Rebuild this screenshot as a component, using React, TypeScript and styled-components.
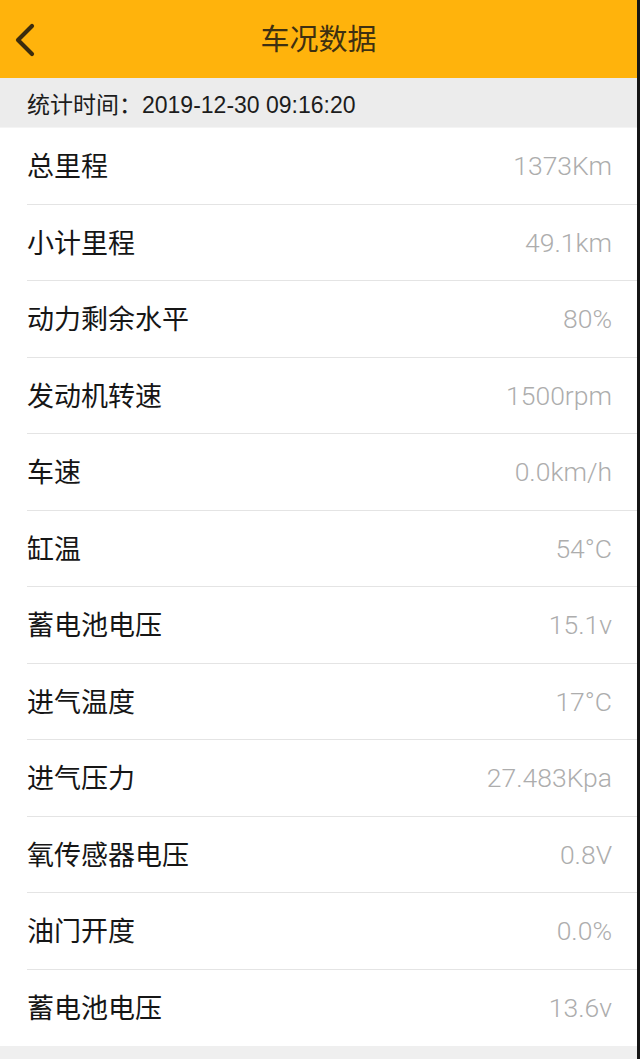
import React from "react";
import styled, { createGlobalStyle } from "styled-components";

const GlobalStyle = createGlobalStyle`
  html, body {
    margin: 0;
    padding: 0;
    background: #efefef;
  }
  body {
    font-family: "Liberation Sans", "Noto Sans CJK SC", sans-serif;
  }
`;

const ITEMS = [
  { label: "总里程", value: "1373Km" },
  { label: "小计里程", value: "49.1km" },
  { label: "动力剩余水平", value: "80%" },
  { label: "发动机转速", value: "1500rpm" },
  { label: "车速", value: "0.0km/h" },
  { label: "缸温", value: "54°C" },
  { label: "蓄电池电压", value: "15.1v" },
  { label: "进气温度", value: "17°C" },
  { label: "进气压力", value: "27.483Kpa" },
  { label: "氧传感器电压", value: "0.8V" },
  { label: "油门开度", value: "0.0%" },
  { label: "蓄电池电压", value: "13.6v" },
];

function App() {
  return (
    <Page>
      <GlobalStyle />
      <Header>
        <BackButton aria-label="返回">
          <svg width="24" height="36" viewBox="0 0 24 36">
            <path
              d="M20 4 L6 18 L20 32"
              fill="none"
              stroke="#3b2c0e"
              strokeWidth="4.2"
              strokeLinecap="round"
              strokeLinejoin="round"
            />
          </svg>
        </BackButton>
        <Title>车况数据</Title>
      </Header>
      <TimeBar>统计时间：2019-12-30 09:16:20</TimeBar>
      <List>
        {ITEMS.map((item, i) => (
          <Row key={i} last={i === ITEMS.length - 1}>
            <Label>{item.label}</Label>
            <Value>{item.value}</Value>
          </Row>
        ))}
      </List>
      <Footer />
    </Page>
  );
}

const Page = styled.div`
  width: 640px;
  min-height: 1059px;
  box-sizing: border-box;
  border-right: 3px solid #151515;
  display: flex;
  flex-direction: column;
  background: #efefef;
`;

const Header = styled.div`
  position: relative;
  height: 78px;
  background: #ffb30c;
  display: flex;
  align-items: center;
  justify-content: center;
`;

const BackButton = styled.div`
  position: absolute;
  left: 12px;
  top: 22px;
  width: 24px;
  height: 36px;
  display: flex;
`;

const Title = styled.div`
  font-family: "Noto Sans CJK SC", sans-serif;
  font-size: 29px;
  color: #3e3011;
  margin-top: -4px;
`;

const TimeBar = styled.div`
  height: 49px;
  background: #ececec;
  display: flex;
  align-items: center;
  padding-left: 27px;
  font-family: "Liberation Sans", "Noto Sans CJK SC", sans-serif;
  font-size: 23px;
  color: #1c1c1c;
  border-bottom: 1px solid #f4f4f4;
`;

const List = styled.div`
  background: #ffffff;
  padding-left: 27px;
  display: flex;
  flex-direction: column;
`;

const Row = styled.div<{ last?: boolean }>`
  height: 76.5px;
  box-sizing: border-box;
  display: flex;
  align-items: center;
  justify-content: space-between;
  padding-right: 25px;
  border-bottom: ${(p) => (p.last ? "none" : "1.5px solid #e4e4e4")};
`;

const Label = styled.div`
  font-family: "Noto Sans CJK SC", sans-serif;
  font-size: 27px;
  color: #161616;
  margin-top: -2px;
`;

const Value = styled.div`
  font-family: Roboto, "Liberation Sans", sans-serif;
  font-weight: 300;
  font-size: 26.5px;
  color: #adadad;
`;

const Footer = styled.div`
  flex: 1;
  background: #efefef;
`;

export default App;
